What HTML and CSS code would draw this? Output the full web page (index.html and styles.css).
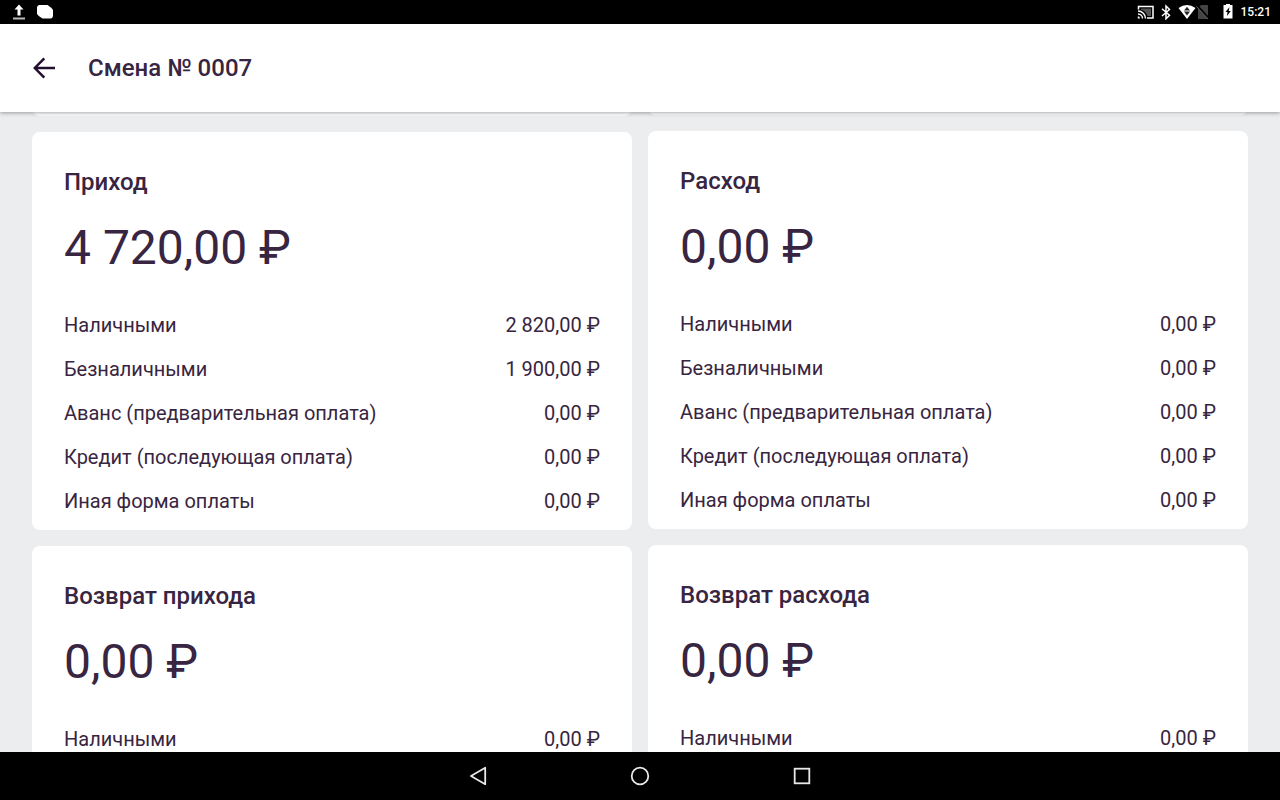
FILE: index.html
```
<!DOCTYPE html>
<html lang="ru">
<head>
    <meta charset="utf-8">
    <title>Смена № 0007</title>
    <link rel="stylesheet" href="styles.css">
</head>
<body>
    <div class="status-bar">
        <div class="status-group">
            <svg class="icon-upload" width="14" height="16" viewBox="0 0 14 16">
                <path d="M7 .5l4.500 5H8.500v6h-3v-6H2.500z" fill="#fff"/>
                <path d="M1 13.500h12v2H1z" fill="#bbb"/>
            </svg>
            <svg width="18" height="16" viewBox="0 0 18 16">
                <path d="M3 1h8.500Q15.500 3.500 17 6v6q-.5 2.500-2.500 2.500H6.500Q2.500 12.500 1 10V3.500Q1 1.500 3 1z" fill="#fff"/>
            </svg>
        </div>
        <div class="status-group">
            <svg width="18" height="16" viewBox="0 0 18 16">
                <path d="M1.500 5.500v-3h14.500v11.500h-6" fill="none" stroke="#fff" stroke-width="1.500"/>
                <path d="M1 7a7.500 7.500 0 0 1 7.500 7.500M1 10a4.500 4.500 0 0 1 4.500 4.500" fill="none" stroke="#fff" stroke-width="1.500"/>
                <path d="M4 4.500h10v7.500h-3.500Q9 7 4 5.800z" fill="#555"/>
                <path d="M.8 12.300a2.200 2.200 0 0 1 2.200 2.200H.8z" fill="#fff"/>
            </svg>
            <svg class="icon-bluetooth" width="12" height="16" viewBox="0 0 12 16">
                <path d="M2 4.800l7.500 6.500L6 14.800V2l3.500 3.500L2 12" fill="none" stroke="#fff" stroke-width="1.500"/>
            </svg>
            <svg class="icon-wifi" width="18" height="16" viewBox="0 0 18 16">
                <path d="M.5 4Q9-2 17.500 4L9 15z" fill="#fff"/>
                <path d="M9 2.800l3 3.700H6zM6 7.500h6L9 11.500z" fill="#222"/>
            </svg>
            <svg class="icon-sim" width="14" height="16" viewBox="0 0 14 16">
                <path d="M5 1h7v14H2V5z" fill="#444"/>
                <path d="M1 1.500l12 13" stroke="#000" stroke-width="2"/>
                <path d="M.5 2.500L12 15" stroke="#666" stroke-width="1"/>
            </svg>
            <svg class="icon-battery" width="10" height="16" viewBox="0 0 10 16">
                <path d="M3 0h4v1h2.500v13.500h-9V1H3z" fill="#fff"/>
                <path d="M6.500 3L2.500 8h2L4 12l3.800-5H5.700z" fill="#000"/>
            </svg>
            <span class="clock">15:21</span>
        </div>
    </div>

    <header class="app-bar">
        <button class="back" type="button" aria-label="Назад">
            <svg width="24" height="24" viewBox="0 0 24 24">
                <path d="M23 12H3M12.300 2.300L2.800 12l9.500 9.700" fill="none" stroke="#23102f" stroke-width="2.500"/>
            </svg>
        </button>
        <h1>Смена № 0007</h1>
    </header>

    <main class="content">
        <div class="column">
            <div class="card-end"></div>
            <section class="card">
                <h2>Приход</h2>
                <p class="total">4 720,00 ₽</p>
                <dl>
                    <div class="row"><dt>Наличными</dt><dd>2 820,00 ₽</dd></div>
                    <div class="row"><dt>Безналичными</dt><dd>1 900,00 ₽</dd></div>
                    <div class="row"><dt>Аванс (предварительная оплата)</dt><dd>0,00 ₽</dd></div>
                    <div class="row"><dt>Кредит (последующая оплата)</dt><dd>0,00 ₽</dd></div>
                    <div class="row"><dt>Иная форма оплаты</dt><dd>0,00 ₽</dd></div>
                </dl>
            </section>
            <section class="card">
                <h2>Возврат прихода</h2>
                <p class="total">0,00 ₽</p>
                <dl>
                    <div class="row"><dt>Наличными</dt><dd>0,00 ₽</dd></div>
                </dl>
            </section>
        </div>
        <div class="column">
            <div class="card-end short"></div>
            <section class="card">
                <h2>Расход</h2>
                <p class="total">0,00 ₽</p>
                <dl>
                    <div class="row"><dt>Наличными</dt><dd>0,00 ₽</dd></div>
                    <div class="row"><dt>Безналичными</dt><dd>0,00 ₽</dd></div>
                    <div class="row"><dt>Аванс (предварительная оплата)</dt><dd>0,00 ₽</dd></div>
                    <div class="row"><dt>Кредит (последующая оплата)</dt><dd>0,00 ₽</dd></div>
                    <div class="row"><dt>Иная форма оплаты</dt><dd>0,00 ₽</dd></div>
                </dl>
            </section>
            <section class="card">
                <h2>Возврат расхода</h2>
                <p class="total">0,00 ₽</p>
                <dl>
                    <div class="row"><dt>Наличными</dt><dd>0,00 ₽</dd></div>
                </dl>
            </section>
        </div>
    </main>

    <nav class="nav-bar">
        <button type="button" aria-label="Назад">
            <svg width="24" height="24" viewBox="0 0 24 24">
                <path d="M19.200 3.800v16.400L5 12z" fill="none" stroke="#e8e8e8" stroke-width="1.800" stroke-linejoin="round"/>
            </svg>
        </button>
        <button type="button" aria-label="Домой">
            <svg width="24" height="24" viewBox="0 0 24 24">
                <circle cx="12" cy="12" r="8.300" fill="none" stroke="#e8e8e8" stroke-width="1.800"/>
            </svg>
        </button>
        <button type="button" aria-label="Недавние">
            <svg width="24" height="24" viewBox="0 0 24 24">
                <rect x="4.700" y="4.700" width="14.600" height="14.600" fill="none" stroke="#e8e8e8" stroke-width="1.800"/>
            </svg>
        </button>
    </nav>
</body>
</html>
```
FILE: styles.css
```
* {
    box-sizing: border-box;
}
body {
    margin: 0;
    height: 100vh;
    display: flex;
    flex-direction: column;
    overflow: hidden;
    background: #ebedef;
    color: #382541;
    font-family: Roboto, sans-serif;
}
h1, h2, p, dl, dd {
    margin: 0;
}
button {
    display: flex;
    padding: 0;
    border: none;
    background: none;
    cursor: pointer;
}
svg {
    display: block;
}

.status-bar {
    flex: none;
    display: flex;
    justify-content: space-between;
    align-items: center;
    height: 24px;
    padding: 0 9px 0 12px;
    background: #000;
    color: #fff;
}
.status-group {
    display: flex;
    align-items: center;
}
.icon-upload {
    margin-right: 10px;
}
.icon-bluetooth {
    margin: 0 6px 0 5px;
}
.icon-battery {
    margin: 0 8px 0 13px;
}
.clock {
    font-size: 12px;
    font-weight: 500;
}

.app-bar {
    flex: none;
    z-index: 1;
    display: flex;
    align-items: center;
    gap: 32px;
    height: 88px;
    padding: 0 32px;
    background: #fff;
    box-shadow: 0 1px 4px rgba(0, 0, 0, 0.35);
}
h1, h2 {
    font-size: 24px;
    font-weight: 500;
    line-height: 36px;
}

.content {
    flex: 1;
    min-height: 0;
    display: flex;
    gap: 16px;
    padding: 0 32px;
    overflow: hidden;
}
.column {
    flex: 1;
    display: flex;
    flex-direction: column;
    gap: 16px;
    margin-top: -36px;
}
/* end of the card scrolled under the app bar */
.card-end {
    flex: none;
    height: 40px;
    border-radius: 8px;
    background: #fff;
}
.card-end.short {
    height: 39px;
}
.card {
    flex: none;
    padding: 32px 32px 7px;
    border-radius: 8px;
    background: #fff;
}
.total {
    margin: 16px 0 23px;
    font-size: 48px;
    line-height: 64px;
}
.row {
    display: flex;
    justify-content: space-between;
    font-size: 20px;
    line-height: 44px;
}

.nav-bar {
    flex: none;
    z-index: 1;
    display: flex;
    justify-content: center;
    align-items: center;
    gap: 138px;
    height: 48px;
    background: #000;
}
```
